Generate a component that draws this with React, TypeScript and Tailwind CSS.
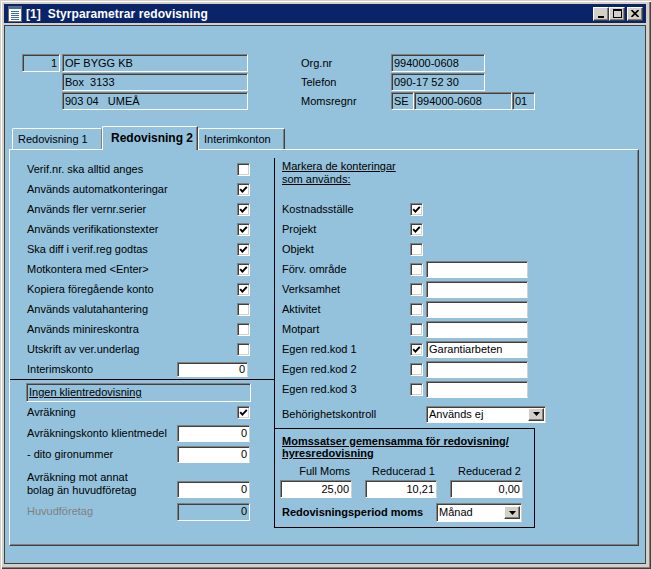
import React from "react";

const sunkenBlue =
  "border border-t-[#808080] border-l-[#808080] border-b-white border-r-white shadow-[inset_1px_1px_0_#404040]";
const sunkenWhite =
  "bg-white border border-t-[#808080] border-l-[#808080] border-b-white border-r-[#d4d0c8] shadow-[inset_1px_1px_0_#404040]";
const raised =
  "bg-[#d4d0c8] border border-t-white border-l-white border-b-[#404040] border-r-[#404040] shadow-[inset_-1px_-1px_0_#808080]";

function Field({ className = "", value = "", right = false, white = false }: { className?: string; value?: string; right?: boolean; white?: boolean }) {
  return (
    <div
      className={`${white ? sunkenWhite : sunkenBlue} flex items-center px-[2px] whitespace-pre overflow-hidden leading-none ${right ? "justify-end" : ""} ${className}`}
    >
      {value}
    </div>
  );
}

function Check({ on = false }: { on?: boolean }) {
  return (
    <div className="w-[13px] h-[13px] shrink-0 bg-white border border-t-[#808080] border-l-[#808080] border-b-white border-r-white shadow-[inset_1px_1px_0_#404040,inset_-1px_-1px_0_#d4d0c8] flex items-center justify-center">
      {on && (
        <svg width="9" height="9" viewBox="0 0 9 9">
          <path d="M1.2 4.2 L3.4 6.6 L7.8 1.8" fill="none" stroke="#000" strokeWidth="1.9" />
        </svg>
      )}
    </div>
  );
}

function Select({ className = "", value }: { className?: string; value: string }) {
  return (
    <div className={`${sunkenWhite} flex items-center justify-between pl-[2px] pr-[1px] leading-none ${className}`}>
      <span>{value}</span>
      <div className={`${raised} w-[16px] h-[13px] flex items-center justify-center`}>
        <svg width="7" height="4" viewBox="0 0 7 4">
          <path d="M0 0 H7 L3.5 4 Z" fill="#000" />
        </svg>
      </div>
    </div>
  );
}

const leftRows: [string, boolean][] = [
  ["Verif.nr. ska alltid anges", false],
  ["Används automatkonteringar", true],
  ["Används fler vernr.serier", true],
  ["Används verifikationstexter", true],
  ["Ska diff i verif.reg godtas", true],
  ["Motkontera med <Enter>", true],
  ["Kopiera föregående konto", true],
  ["Används valutahantering", false],
  ["Används minireskontra", false],
  ["Utskrift av ver.underlag", false],
];

const rightRows: [string, boolean, boolean, string][] = [
  ["Kostnadsställe", true, false, ""],
  ["Projekt", true, false, ""],
  ["Objekt", false, false, ""],
  ["Förv. område", false, true, ""],
  ["Verksamhet", false, true, ""],
  ["Aktivitet", false, true, ""],
  ["Motpart", false, true, ""],
  ["Egen red.kod 1", true, true, "Garantiarbeten"],
  ["Egen red.kod 2", false, true, ""],
  ["Egen red.kod 3", false, true, ""],
];

export default function App() {
  return (
    <div className="w-[651px] h-[569px] bg-[#d4d0c8] pt-[4px] pl-[4px] pr-[5px] pb-[5px] flex flex-col font-['Liberation_Sans',Arial,sans-serif] text-[11px] text-black shadow-[inset_1px_1px_0_#d4d0c8,inset_2px_2px_0_#fff,inset_-1px_-1px_0_#404040,inset_-2px_-2px_0_#808080]">
      {/* title bar */}
      <div className="h-[19px] bg-[#0a246a] flex items-center pl-[3px] pr-[3px]">
        <svg width="16" height="16" viewBox="0 0 16 16">
          <rect x="1.5" y="0.5" width="13" height="15" fill="#fff" stroke="#6b6b6b" />
          <rect x="2" y="1" width="12" height="2" fill="#3a6ea5" />
          <path d="M4 5.5 H12 M4 7.5 H12 M4 9.5 H12 M4 11.5 H12 M4 13.5 H12" stroke="#3a6ea5" />
        </svg>
        <span className="ml-[3px] text-white font-bold text-[12px] whitespace-pre tracking-[0.1px]">[1]  Styrparametrar redovisning</span>
        <div className="ml-auto flex items-center">
          <div className={`${raised} w-[16px] h-[14px] flex items-end justify-center pb-[2px]`}>
            <div className="w-[6px] h-[2px] bg-black" />
          </div>
          <div className={`${raised} w-[16px] h-[14px] flex items-center justify-center`}>
            <div className="w-[9px] h-[9px] border border-black border-t-2" />
          </div>
          <div className={`${raised} ml-[2px] w-[16px] h-[14px] flex items-center justify-center`}>
            <svg width="8" height="7" viewBox="0 0 8 7">
              <path d="M0.5 0 L7.5 7 M7.5 0 L0.5 7" stroke="#000" strokeWidth="1.6" />
            </svg>
          </div>
        </div>
      </div>

      {/* client area */}
      <div className="mt-[2px] flex-1 bg-[#94c2dc] border border-[#404040] flex flex-col">
        {/* header */}
        <div className="pt-[28px] flex flex-col gap-[1px]">
          <div className="flex items-center h-[18px] pl-[17px]">
            <Field className="w-[38px] h-[18px]" value="1" right />
            <Field className="ml-[2px] w-[186px] h-[18px]" value="OF BYGG KB" />
            <span className="ml-[53px] w-[90px]">Org.nr</span>
            <Field className="w-[94px] h-[18px]" value="994000-0608" />
          </div>
          <div className="flex items-center h-[18px] pl-[57px]">
            <Field className="w-[186px] h-[18px]" value="Box  3133" />
            <span className="ml-[53px] w-[90px]">Telefon</span>
            <Field className="w-[94px] h-[18px]" value="090-17 52 30" />
          </div>
          <div className="flex items-center h-[18px] pl-[57px]">
            <Field className="w-[186px] h-[18px]" value="903 04   UMEÅ" />
            <span className="ml-[53px] w-[90px]">Momsregnr</span>
            <Field className="w-[23px] h-[18px]" value="SE" />
            <Field className="w-[98px] h-[18px]" value="994000-0608" />
            <Field className="w-[23px] h-[18px]" value="01" />
          </div>
        </div>

        {/* tabs */}
        <div className="mt-[16px] h-[23px] flex items-end pl-[7px]">
          <div className="w-[90px] h-[21px] border-t border-l border-white border-r border-r-[#808080] rounded-tl-[2px] flex items-center pl-[5px] pt-[1px]">
            Redovisning 1
          </div>
          <div className="relative z-10 -mb-[1px] w-[96px] h-[24px] bg-[#94c2dc] border-t border-l border-white border-r border-r-[#404040] shadow-[inset_-1px_0_0_#808080] rounded-tl-[2px] flex items-center pl-[8px] pb-[1px] font-bold text-[12px]">
            Redovisning 2
          </div>
          <div className="w-[87px] h-[21px] border-t border-l border-white border-r border-r-[#404040] shadow-[inset_-1px_0_0_#808080] rounded-tl-[2px] rounded-tr-[2px] flex items-center pl-[5px] pt-[1px]">
            Interimkonton
          </div>
        </div>

        {/* tab panel */}
        <div className="ml-[4px] w-[630px] h-[397px] border-t border-l border-white border-r border-b border-r-[#404040] border-b-[#404040] shadow-[inset_-1px_-1px_0_#808080] flex">
          {/* left column */}
          <div className="w-[264px] flex flex-col">
            <div className="pt-[9px] border-b border-black">
              {leftRows.map(([label, on]) => (
                <div key={label} className="h-[20px] flex items-center justify-between pl-[17px] pr-[24px]">
                  <span>{label}</span>
                  <Check on={on} />
                </div>
              ))}
              <div className="h-[20px] flex items-center justify-between pl-[17px] pr-[24px]">
                <span>Interimskonto</span>
                <Field white className="mr-[2px] w-[71px] h-[15px]" value="0" right />
              </div>
            </div>
            <div className="mt-[3px] ml-[16px] w-[225px] h-[19px]">
              <Field className="w-full h-full underline" value="Ingen klientredovisning" />
            </div>
            <div className="h-[21px] flex items-center justify-between pl-[17px] pr-[24px]">
              <span>Avräkning</span>
              <Check on />
            </div>
            <div className="h-[21px] flex items-center justify-between pl-[17px] pr-[24px]">
              <span>Avräkningskonto klientmedel</span>
              <Field white className="w-[73px] h-[17px]" value="0" right />
            </div>
            <div className="h-[21px] flex items-center justify-between pl-[17px] pr-[24px]">
              <span>- dito gironummer</span>
              <Field white className="w-[73px] h-[17px]" value="0" right />
            </div>
            <div className="h-[35px] flex items-end justify-between pl-[17px] pr-[24px]">
              <span className="mb-[3px] leading-[13px]">
                Avräkning mot annat
                <br />
                bolag än huvudföretag
              </span>
              <Field white className="mb-[2px] w-[73px] h-[17px]" value="0" right />
            </div>
            <div className="h-[23px] flex items-center justify-between pl-[17px] pr-[24px]">
              <span className="text-[#808080]">Huvudföretag</span>
              <Field className="w-[73px] h-[18px]" value="0" right />
            </div>
          </div>

          {/* right column */}
          <div className="mt-[8px] flex flex-col">
            <div className="border-l border-black pl-[7px] pt-[2px] pb-[4px]">
              <div className="leading-[13px] underline">
                Markera de konteringar
                <br />
                som används:
              </div>
              <div className="mt-[13px]">
                {rightRows.map(([label, on, hasField, value]) => (
                  <div key={label} className="h-[20px] flex items-center">
                    <span className="w-[128px]">{label}</span>
                    <Check on={on} />
                    {hasField && <Field white className="ml-[3px] w-[102px] h-[17px]" value={value} />}
                  </div>
                ))}
              </div>
              <div className="mt-[5px] h-[20px] flex items-center">
                <span className="w-[144px]">Behörighetskontroll</span>
                <Select className="w-[120px] h-[17px]" value="Används ej" />
              </div>
            </div>
            <div className="w-[261px] h-[100px] border border-black flex flex-col">
              <div className="pl-[7px] pt-[6px] leading-[12px] font-bold underline">
                Momssatser gemensamma för redovisning/
                <br />
                hyresredovisning
              </div>
              <div className="mt-[6px] pl-[5px] flex gap-[13px]">
                {[
                  ["Full Moms", "25,00", "w-[72px]"],
                  ["Reducerad 1", "10,21", "w-[72px]"],
                  ["Reducerad 2", "0,00", "w-[73px]"],
                ].map(([h, v, w]) => (
                  <div key={h} className={`${w} flex flex-col`}>
                    <div className="h-[12px] leading-[12px] text-right pr-[2px]">{h}</div>
                    <Field white className="mt-[3px] w-full h-[18px]" value={v} right />
                  </div>
                ))}
              </div>
              <div className="mt-[3px] h-[23px] flex items-center pl-[7px]">
                <span className="w-[154px] font-bold">Redovisningsperiod moms</span>
                <Select className="w-[86px] h-[19px]" value="Månad" />
              </div>
            </div>
          </div>
        </div>
      </div>
    </div>
  );
}
